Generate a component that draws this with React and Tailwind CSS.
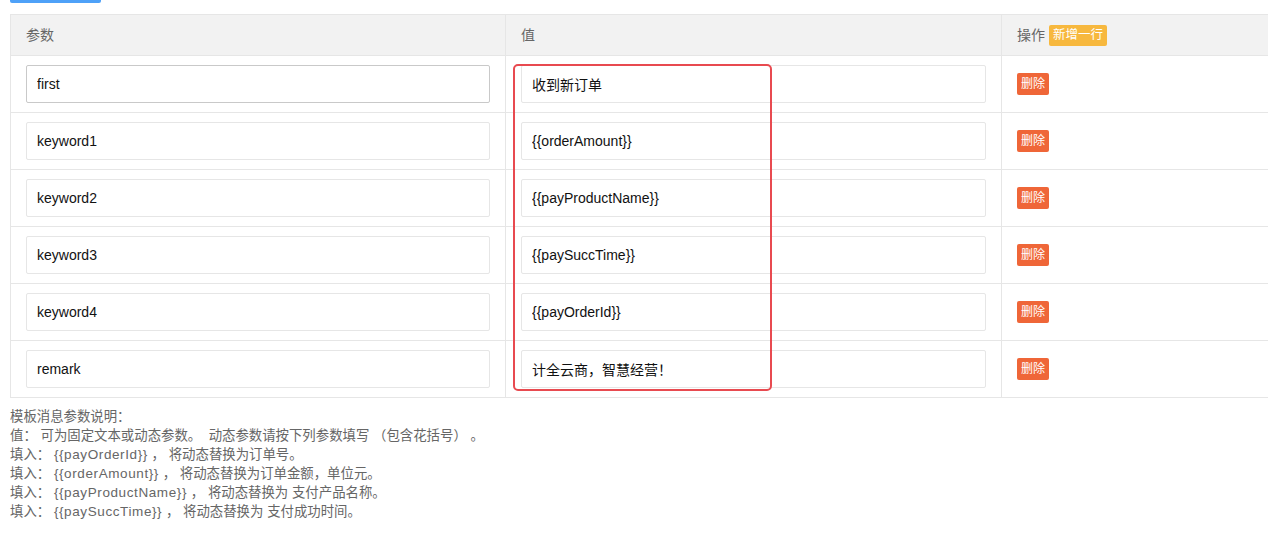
const rows = [
  { key: "first", value: "收到新订单", focused: true },
  { key: "keyword1", value: "{{orderAmount}}" },
  { key: "keyword2", value: "{{payProductName}}" },
  { key: "keyword3", value: "{{paySuccTime}}" },
  { key: "keyword4", value: "{{payOrderId}}" },
  { key: "remark", value: "计全云商，智慧经营！" },
];

const params = [
  { name: "payOrderId", desc: "将动态替换为订单号。" },
  { name: "orderAmount", desc: "将动态替换为订单金额，单位元。" },
  { name: "payProductName", desc: "将动态替换为 支付产品名称。" },
  { name: "paySuccTime", desc: "将动态替换为 支付成功时间。" },
];

function Cell({ children }) {
  return (
    <div className="flex items-center border-r border-[#e6e6e6] px-[15px]">
      {children}
    </div>
  );
}

function TextInput({ value, focused }) {
  return (
    <input
      defaultValue={value}
      className={`h-[38px] w-full rounded-[2px] border bg-white px-[10px] text-[14px] text-[#111] outline-none ${
        focused ? "border-[#c9c9c9]" : "border-[#e6e6e6]"
      }`}
    />
  );
}

export default function App() {
  return (
    <div
      className="h-[541px] w-[1268px] overflow-hidden bg-white"
      style={{ fontFamily: '"Liberation Sans", "Noto Sans CJK SC", sans-serif' }}
    >
      <div className="ml-[10px] h-[3px] w-[91px] rounded-b-[2px] bg-[#4ea1f8]" />

      <div className="relative ml-[10px] mt-[11px] w-[1280px] border border-[#e6e6e6]">
        <div className="grid h-[41px] grid-cols-[495px_496px_1fr] border-b border-[#e6e6e6] bg-[#f2f2f2] text-[14px] text-[#666]">
          <Cell>参数</Cell>
          <Cell>值</Cell>
          <Cell>
            操作
            <span className="ml-[4px] inline-block h-[21px] rounded-[2px] bg-[#f7b83e] px-[4px] text-[12.5px] leading-[21px] text-white">
              新增一行
            </span>
          </Cell>
        </div>

        {rows.map((row, i) => (
          <div
            key={row.key}
            className={`grid grid-cols-[495px_496px_1fr] ${
              i < rows.length - 1 ? "h-[57px] border-b border-[#e6e6e6]" : "h-[56px]"
            }`}
          >
            <Cell>
              <TextInput value={row.key} focused={row.focused} />
            </Cell>
            <Cell>
              <TextInput value={row.value} />
            </Cell>
            <Cell>
              <button className="h-[22px] rounded-[2px] bg-[#ef6638] px-[4px] text-[12px] leading-[22px] text-white">
                删除
              </button>
            </Cell>
          </div>
        ))}

        {/* highlight around the value column */}
        <div className="pointer-events-none absolute left-[502px] top-[49px] h-[327px] w-[259px] rounded-[5px] border-[2.5px] border-[#e84a50]" />
      </div>

      <div className="ml-[10px] mt-[9px] whitespace-pre text-[13.4px] leading-[19px] text-[#666]">
        <div>模板消息参数说明：</div>
        <div>值： 可为固定文本或动态参数。  动态参数请按下列参数填写 （包含花括号） 。</div>
        {params.map((p) => (
          <div key={p.name}>
            填入： <span className="text-[13.5px] tracking-[0.6px]">{`{{${p.name}}}`}</span> ， {p.desc}
          </div>
        ))}
      </div>
    </div>
  );
}
